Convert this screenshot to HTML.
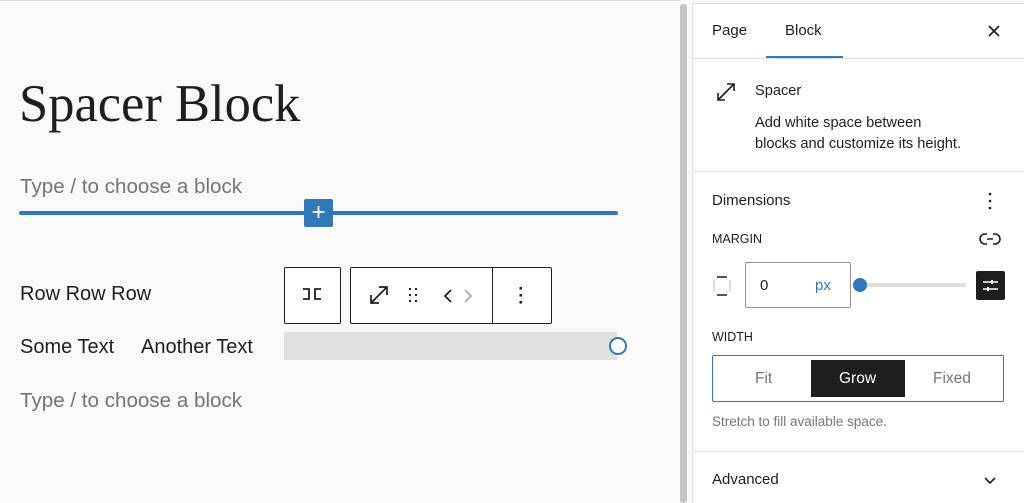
<!DOCTYPE html>
<html><head><meta charset="utf-8"><style>
*{margin:0;padding:0;box-sizing:border-box}
body{width:1024px;height:503px;overflow:hidden;background:#f9f9f9;font-family:"Liberation Sans",sans-serif;color:#1e1e1e;position:relative}
.a{position:absolute}
.t{font-size:20px;white-space:nowrap}
.ph{color:#757575;font-size:20.6px}
.s{font-size:14.6px;white-space:nowrap}
</style></head><body>
<div class="a" style="left:0;top:0;width:680px;height:3px;border-top:1px solid #e0e0e0"></div>
<div class="a" style="left:19px;top:74px;font-family:'Liberation Serif',serif;font-size:52.5px;white-space:nowrap">Spacer Block</div>
<div class="a t ph" style="left:20px;top:175px">Type / to choose a block</div>
<div class="a" style="left:19px;top:211px;width:599px;height:4px;background:#3178b8;border-radius:2px"></div>
<div class="a" style="left:304px;top:199px;width:29px;height:28px;background:#3178b8;border-radius:2px;color:#fff;font-size:24px;line-height:27px;text-align:center">+</div>
<div class="a t" style="left:20px;top:283px">Row Row Row</div>
<div class="a t" style="left:20px;top:336px">Some Text</div>
<div class="a t" style="left:141px;top:336px">Another Text</div>
<div class="a t ph" style="left:20px;top:389px">Type / to choose a block</div>
<div class="a" style="left:284px;top:267px;width:57px;height:57px;border:1px solid #1e1e1e;border-radius:2px;background:#fff"></div>
<svg class="a" style="left:300px;top:286px" width="24" height="16"><path d="M3 3h6v10H3M21 3h-6v10h6" fill="none" stroke="#1e1e1e" stroke-width="1.8"/></svg>
<div class="a" style="left:350px;top:267px;width:202px;height:57px;border:1px solid #1e1e1e;border-radius:2px;background:#fff"></div>
<div class="a" style="left:492px;top:267px;width:1px;height:57px;background:#1e1e1e"></div>
<svg class="a" style="left:368px;top:284px" width="22" height="22"><path d="M3 19L19 3M11 3h8v8M3 11v8h8" fill="none" stroke="#1e1e1e" stroke-width="1.7"/></svg>
<svg class="a" style="left:408px;top:287px" width="12" height="18"><g fill="#1e1e1e"><rect x="1" y="1" width="2" height="2"/><rect x="7" y="1" width="2" height="2"/><rect x="1" y="7" width="2" height="2"/><rect x="7" y="7" width="2" height="2"/><rect x="1" y="13" width="2" height="2"/><rect x="7" y="13" width="2" height="2"/></g></svg>
<svg class="a" style="left:441px;top:287px" width="34" height="18"><path d="M10 3L4 9l6 6" fill="none" stroke="#1e1e1e" stroke-width="1.7"/><path d="M24 3l6 6-6 6" fill="none" stroke="#aaa" stroke-width="1.7"/></svg>
<svg class="a" style="left:519px;top:286px" width="4" height="20"><g fill="#1e1e1e"><rect x="0.5" y="1" width="2.5" height="2.5"/><rect x="0.5" y="8" width="2.5" height="2.5"/><rect x="0.5" y="15" width="2.5" height="2.5"/></g></svg>
<div class="a" style="left:284px;top:332px;width:333px;height:28px;background:#e0e0e0"></div>
<div class="a" style="left:609px;top:337px;width:18px;height:18px;border:2px solid #3178b8;border-radius:50%;background:#fff"></div>
<div class="a" style="left:680px;top:4px;width:7px;height:499px;background:#c4c4c4;border-radius:3px"></div>
<div class="a" style="left:692px;top:3px;width:332px;height:500px;background:#fff;border-left:1px solid #e0e0e0;border-top:1px solid #e0e0e0"></div>
<div class="a s" style="left:712px;top:22px;font-size:15px">Page</div>
<div class="a s" style="left:785px;top:22px;font-size:15px">Block</div>
<div class="a" style="left:766px;top:56px;width:77px;height:2px;background:#3178b8"></div>
<div class="a" style="left:693px;top:58px;width:331px;height:1px;background:#e0e0e0"></div>
<svg class="a" style="left:988px;top:25px" width="12" height="12"><path d="M1 1l10 10M11 1L1 11" stroke="#1e1e1e" stroke-width="1.7"/></svg>
<svg class="a" style="left:716px;top:82px" width="20" height="20"><path d="M2 18L18 2M11 2h7v7M2 11v7h7" fill="none" stroke="#1e1e1e" stroke-width="1.6"/></svg>
<div class="a s" style="left:755px;top:83px">Spacer</div>
<div class="a s" style="left:755px;top:113px;line-height:21px">Add white space between<br>blocks and customize its height.</div>
<div class="a" style="left:693px;top:171px;width:331px;height:1px;background:#e0e0e0"></div>
<div class="a s" style="left:712px;top:192px;font-size:15px">Dimensions</div>
<svg class="a" style="left:988px;top:192px" width="4" height="18"><g fill="#1e1e1e"><circle cx="2" cy="2" r="1.3"/><circle cx="2" cy="9" r="1.3"/><circle cx="2" cy="16" r="1.3"/></g></svg>
<div class="a" style="left:712px;top:232px;font-size:12.5px">MARGIN</div>
<svg class="a" style="left:979px;top:232px" width="22" height="14"><path d="M8 2H6a5 5 0 000 10h2M14 2h2a5 5 0 010 10h-2M8 7h6" fill="none" stroke="#1e1e1e" stroke-width="1.6"/></svg>
<svg class="a" style="left:712px;top:276px" width="20" height="20"><path d="M5 1h10M5 19h10" stroke="#1e1e1e" stroke-width="1.5"/><path d="M2 4v12M18 4v12" stroke="#bbb" stroke-width="1"/></svg>
<div class="a" style="left:745px;top:262px;width:106px;height:46px;border:1px solid #949494;border-radius:2px"></div>
<div class="a s" style="left:760px;top:277px;font-size:15px">0</div>
<div class="a s" style="left:815px;top:277px;color:#3178b8;font-size:15px">px</div>
<div class="a" style="left:860px;top:283px;width:106px;height:4px;background:#ddd;border-radius:2px"></div>
<div class="a" style="left:853px;top:278px;width:14px;height:14px;background:#3178b8;border-radius:50%"></div>
<div class="a" style="left:976px;top:271px;width:29px;height:29px;background:#1e1e1e;border-radius:2px"></div>
<svg class="a" style="left:981px;top:277px" width="19" height="17"><path d="M2 5h15M2 12h15" stroke="#fff" stroke-width="1.5"/><rect x="10" y="3" width="2" height="4" fill="#fff"/><rect x="6" y="10" width="2" height="4" fill="#fff"/></svg>
<div class="a" style="left:712px;top:330px;font-size:12.5px">WIDTH</div>
<div class="a" style="left:712px;top:355px;width:292px;height:47px;border:1px solid #3178b8;border-radius:2px"></div>
<div class="a" style="left:811px;top:360px;width:94px;height:37px;background:#1e1e1e"></div>
<div class="a s" style="left:755px;top:370px;color:#757575;font-size:15.5px">Fit</div>
<div class="a s" style="left:839px;top:370px;color:#fff;font-size:15.5px">Grow</div>
<div class="a s" style="left:933px;top:370px;color:#757575;font-size:15.5px">Fixed</div>
<div class="a" style="left:712px;top:414px;font-size:13.5px;color:#757575">Stretch to fill available space.</div>
<div class="a" style="left:693px;top:451px;width:331px;height:1px;background:#e0e0e0"></div>
<div class="a s" style="left:712px;top:471px;font-size:15px">Advanced</div>
<svg class="a" style="left:983px;top:476px" width="14" height="9"><path d="M2 2l5 5 5-5" fill="none" stroke="#1e1e1e" stroke-width="1.6"/></svg>
</body></html>
